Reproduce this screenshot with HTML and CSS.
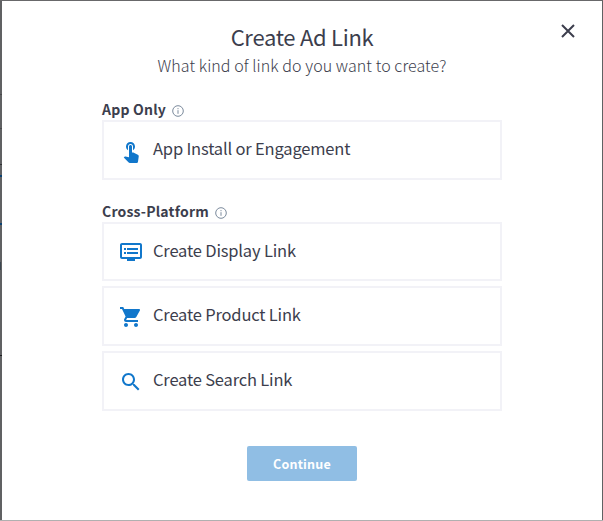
FILE: index.html
```html
<!DOCTYPE html>
<html lang="en">
<head>
<meta charset="utf-8">
<title>Create Ad Link</title>
<link rel="stylesheet" href="styles.css">
</head>
<body>
<main class="modal">
  <button class="close" aria-label="Close"><svg width="16" height="16" viewBox="0 0 16 16"><path d="M2 2l12 12M14 2L2 14"/></svg></button>
  <h1 class="title">Create Ad Link</h1>
  <p class="subtitle">What kind of link do you want to create?</p>
  <section class="group">
    <h2 class="label">App Only<svg class="info" viewBox="0 0 12 12"><circle cx="6" cy="6" r="5.3"/><path d="M6 5.2v3.6M6 3.1v1.1"/></svg></h2>
    <div class="card">
      <svg class="icon" viewBox="0 0 24 24"><path d="M9 11.24V7.5C9 6.12 10.12 5 11.5 5S14 6.12 14 7.5v3.74c1.21-.81 2-2.18 2-3.74C16 5.01 13.99 3 11.5 3S7 5.01 7 7.5c0 1.56.79 2.93 2 3.74zm9.84 4.63l-4.54-2.26c-.17-.07-.35-.11-.54-.11H13v-6c0-.83-.67-1.5-1.5-1.5S10 6.67 10 7.5v10.74l-3.43-.72c-.08-.01-.15-.03-.24-.03-.31 0-.59.13-.79.33l-.79.8 4.94 4.94c.27.27.65.44 1.06.44h6.79c.75 0 1.33-.55 1.44-1.28l.75-5.27c.01-.07.02-.14.02-.2 0-.62-.38-1.16-.91-1.38z"/></svg>
      <span class="name">App Install or Engagement</span>
    </div>
  </section>
  <section class="group">
    <h2 class="label">Cross-Platform<svg class="info" viewBox="0 0 12 12"><circle cx="6" cy="6" r="5.3"/><path d="M6 5.2v3.6M6 3.1v1.1"/></svg></h2>
    <div class="card card-short">
      <svg class="icon" viewBox="0 0 24 24"><path d="M21 3H3c-1.100 0-2 .9-2 2v12c0 1.100.9 2 2 2h5v2h8v-2h5c1.100 0 1.990-.9 1.990-2L23 5c0-1.100-.9-2-2-2zm0 14H3V5h18v12zm-2-9H8v2h11V8zm0 4H8v2h11v-2zM7 8H5v2h2V8zm0 4H5v2h2v-2z"/></svg>
      <span class="name">Create Display Link</span>
    </div>
    <div class="card">
      <svg class="icon" viewBox="0 0 24 24"><path d="M7 18c-1.100 0-1.990.9-1.990 2S5.900 22 7 22s2-.9 2-2-.9-2-2-2zM1 2v2h2l3.600 7.590-1.350 2.450c-.16.28-.25.61-.25.96 0 1.100.9 2 2 2h12v-2H7.420c-.14 0-.25-.11-.25-.25l.03-.12.900-1.630h7.450c.75 0 1.410-.41 1.750-1.030l3.580-6.490c.08-.14.12-.31.12-.48 0-.55-.45-1-1-1H5.210l-.94-2H1zm16 16c-1.100 0-1.990.9-1.990 2s.89 2 1.990 2 2-.9 2-2-.9-2-2-2z"/></svg>
      <span class="name">Create Product Link</span>
    </div>
    <div class="card">
      <svg class="icon" viewBox="0 0 24 24"><path d="M15.500 14h-.79l-.28-.27C15.410 12.590 16 11.110 16 9.500 16 5.910 13.090 3 9.500 3S3 5.910 3 9.500 5.910 16 9.500 16c1.610 0 3.090-.59 4.230-1.570l.27.28v.79l5 4.990L20.490 19l-4.990-5zm-6 0C7.010 14 5 11.990 5 9.500S7.010 5 9.500 5 14 7.010 14 9.500 11.990 14 9.500 14z"/></svg>
      <span class="name">Create Search Link</span>
    </div>
  </section>
  <button class="continue">Continue</button>
</main>
</body>
</html>
```
FILE: styles.css
```css
* { box-sizing: border-box; }
body {
  margin: 0;
  height: 521px;
  padding: 1px 1px 1px 2px;
  overflow: hidden;
  /* dimmed page edges showing around the modal */
  background:
    linear-gradient(#48494b, #48494b) 0 94px / 2px 1px no-repeat,
    linear-gradient(#48494b, #48494b) 0 128px / 2px 1px no-repeat,
    linear-gradient(#303133, #303133) 0 164px / 2px 1px no-repeat,
    linear-gradient(#0b4272, #0b4272) 0 175px / 2px 2px no-repeat,
    linear-gradient(#0b4272, #0b4272) 0 223px / 2px 2px no-repeat,
    linear-gradient(#3b4650, #3b4650) 0 262px / 1px 8px no-repeat,
    linear-gradient(#1c1d1f, #1c1d1f) 0 355px / 2px 1px no-repeat,
    linear-gradient(#68686a 0 1px, #606163 1px 520px, #b0b0b0 520px);
  color: #3c3e4d;
  font-family: "Noto Sans CJK SC", "Open Sans", sans-serif;
}
.modal {
  position: relative;
  height: 519px;
  padding: 19px 100px 0;
  background: #fff;
}
.close {
  position: absolute;
  top: 22px;
  right: 26px;
  width: 16px;
  height: 16px;
  padding: 0;
  border: 0;
  background: none;
}
.close svg { display: block; fill: none; stroke: #3c3e4d; stroke-width: 2; }
.title, .subtitle, .label { margin: 0; white-space: nowrap; }
.title { height: 33px; font-size: 22px; line-height: 32px; font-weight: 400; letter-spacing: -.29px; text-align: center; }
.subtitle { height: 25px; font-size: 16px; line-height: 24px; font-weight: 300; letter-spacing: .07px; text-align: center; }
.group { margin-top: 21px; }
.label { display: flex; align-items: center; gap: 6px; height: 21px; font-size: 14px; line-height: 21px; font-weight: 700; letter-spacing: .2px; }
.info { width: 12px; height: 12px; margin-top: 2px; fill: none; stroke: #7b8a9c; stroke-width: 1; }
.card {
  display: flex;
  align-items: center;
  gap: 10px;
  height: 60px;
  padding: 2px 15px 0;
  border: 2px solid #f2f2f7;
}
.card-short { height: 59px; padding-top: 1px; }
.card + .card { margin-top: 5px; }
.icon { width: 24px; height: 24px; fill: #1177cb; flex: none; }
.name { font-size: 16.5px; line-height: 24px; letter-spacing: -.18px; white-space: nowrap; margin-top: -6px; }
.card-short .name { margin-top: -5px; }
.continue {
  display: block;
  width: 110px;
  height: 35px;
  margin: 35px auto 0;
  padding: 0;
  border: 0;
  border-radius: 2px;
  background: #90bee4;
  color: #fff;
  font: 700 12.5px/34px "Noto Sans CJK SC", "Open Sans", sans-serif;
  letter-spacing: .2px;
}
```
